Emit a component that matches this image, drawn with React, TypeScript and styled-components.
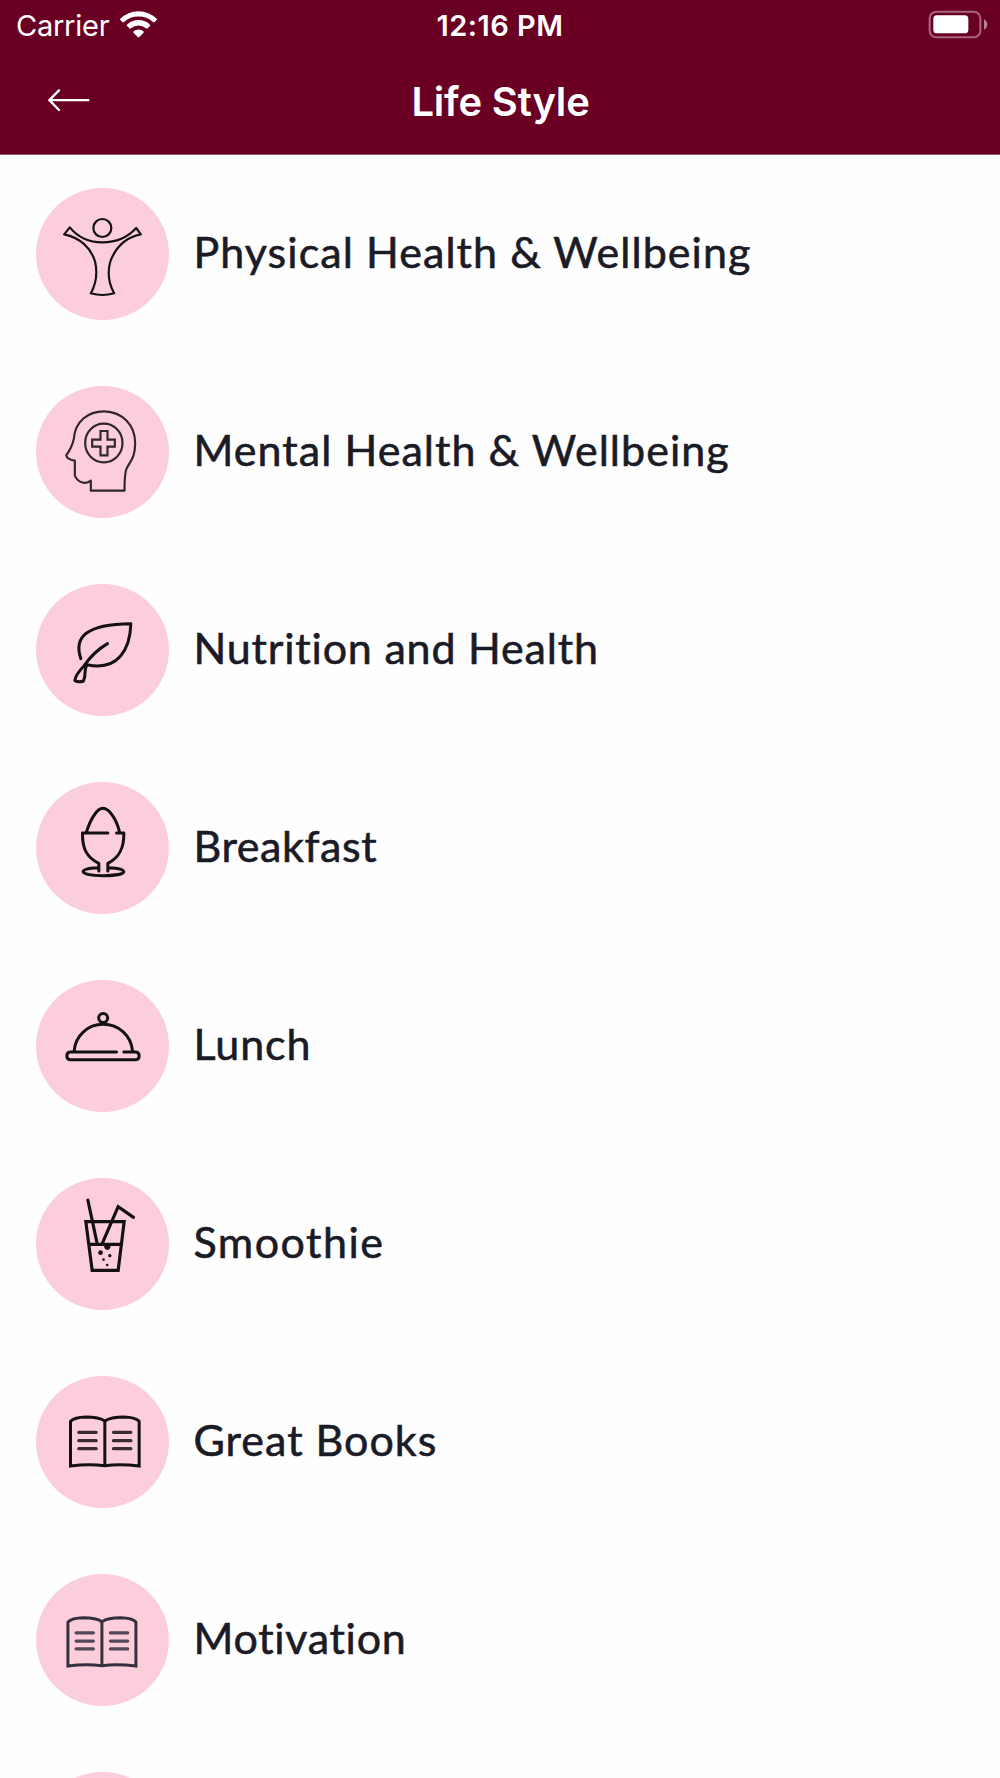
import React from 'react';
import styled, { createGlobalStyle } from 'styled-components';

const GlobalStyle = createGlobalStyle`
  * { box-sizing: border-box; }
  body { margin: 0; background: #fefefe; }
`;

const Screen = styled.main`
  display: flex;
  flex-direction: column;
  width: 1000px;
  height: 1778px;
  overflow: hidden;
  background: #fefefe;
`;

const Header = styled.header`
  flex: none;
  display: flex;
  flex-direction: column;
  height: 155px;
  background: #690024;
  border-bottom: 1px solid #96566e;
  color: #fff;
  font-family: Inter, 'Liberation Sans', sans-serif;
`;

const Bar = styled.div<{ $height: number; $top?: number; $left: number; $right: number }>`
  display: grid;
  grid-template-columns: 1fr auto 1fr;
  align-items: center;
  height: ${(p) => p.$height}px;
  padding: ${(p) => p.$top ?? 0}px ${(p) => p.$right}px 0 ${(p) => p.$left}px;
`;

const Network = styled.div`
  display: flex;
  align-items: center;
  gap: 11px;
`;

const Carrier = styled.span`
  padding-top: 3px;
  font-size: 29px;
  line-height: 36px;
  letter-spacing: -0.25px;
`;

const Clock = styled.time`
  padding: 3px 4px 0 0;
  font-size: 29px;
  line-height: 36px;
  font-weight: 600;
  letter-spacing: 0.5px;
`;

const Title = styled.h1`
  margin: 0;
  font-size: 40px;
  line-height: 48px;
  font-weight: 600;
  letter-spacing: -0.2px;
`;

const BackButton = styled.button`
  display: flex;
  justify-self: start;
  padding: 0 0 4px;
  border: 0;
  background: none;
  color: inherit;
`;

const Glyph = styled.svg`
  display: block;
  flex: none;
`;

const Battery = styled(Glyph)`
  justify-self: end;
`;

const List = styled.ul`
  flex: none;
  margin: 0;
  padding: 0;
  list-style: none;
`;

const Row = styled.li`
  display: flex;
  align-items: center;
  gap: 24.5px;
  height: 198px;
  padding-left: 36px;
`;

const Badge = styled.span`
  flex: none;
  width: 133px;
  height: 132px;
  border-radius: 50%;
  background: #fccedb;
`;

const Label = styled.span<{ $tracking: number }>`
  padding-bottom: 4px;
  color: #1a1b26;
  font-family: Lato, 'Open Sans', sans-serif;
  font-size: 43px;
  line-height: 56px;
  letter-spacing: ${(p) => p.$tracking}px;
  white-space: nowrap;
  -webkit-text-stroke: 0.6px #1a1b26;
`;

const Art = styled.svg<{ $ink: string; $weight: number }>`
  display: block;
  width: 133px;
  height: 132px;
  fill: none;
  stroke: ${(p) => p.$ink};
  stroke-width: ${(p) => p.$weight};
  stroke-linecap: round;
  stroke-linejoin: round;
`;

const Book = () => (
  <>
    <path strokeLinejoin="miter" d="M122 294V160Q134 148 168 147Q208 147 225 159Q243 147 282 147Q317 148 328 160V294Q270 287 225 293Q176 287 122 294ZM225 159V293" />
    <path strokeWidth="10" opacity="0.85" d="M147 193H199M147 218H199M147 242H199M251 193H303M251 218H303M251 242H303" />
  </>
);

type Entry = {
  label: string;
  tracking: number;
  ink?: string;
  weight?: number;
  art?: React.ReactNode;
};

const entries: Entry[] = [
  {
    label: 'Physical Health & Wellbeing',
    tracking: 1.06,
    weight: 6.5,
    art: (
      <>
        <circle cx="217.5" cy="144" r="27" />
        <path d="M120 142L103 163C151 173 184 204 196 246Q207 296 183 340Q218 350 253 340Q228 295 241 246C256 204 287 172 333 163L319 144C292 174 259 187 218 187C177 187 146 174 120 142Z" />
      </>
    ),
  },
  {
    label: 'Mental Health & Wellbeing',
    tracking: 1.05,
    ink: '#30262d',
    weight: 6.5,
    art: (
      <>
        <path d="M183 338V308C169 319 146 317 135 293V248Q112 245 109 232Q127 207 132 182C136 130 174 100 223 100C279 101 316 143 316 195C316 238 303 247 290 272Q284 286 284 338Z" />
        <ellipse cx="222" cy="195" rx="56" ry="58" />
        <path strokeLinejoin="miter" d="M212 159H233V185H255V206H233V232H212V206H187V185H212Z" />
      </>
    ),
  },
  {
    label: 'Nutrition and Health',
    tracking: 0.8,
    weight: 9,
    art: (
      <path d="M153 248C131 184 168 144 303 143C301 219 265 286 172 266M233 203C204 220 180 244 163 269Q136 297 135 314Q147 320 161 315Q166 302 166 285Q168 270 172 266" />
    ),
  },
  {
    label: 'Breakfast',
    tracking: 0.6,
    weight: 9,
    art: (
      <path d="M170 174C182 133 203 103 219 103C238 103 260 136 269 174M234 177H158C157 224 171 251 207 268V291M260 177H282C283 224 268 251 234 268V291M203 281C173 282 160 288 160 293C161 301 190 305 220 305C253 305 281 300 282 293C281 287 265 282 238 281" />
    ),
  },
  {
    label: 'Lunch',
    tracking: 0.9,
    weight: 9,
    art: (
      <>
        <circle cx="220" cy="138" r="13.5" />
        <path d="M133 237C136 192 173 157 220 157C267 157 304 191 308 237M260 240H121Q111 241 111 252Q111 262 121 263H318Q328 262 328 252Q328 241 318 240H282" />
      </>
    ),
  },
  {
    label: 'Smoothie',
    tracking: 1.5,
    weight: 9.5,
    art: (
      <>
        <path strokeLinejoin="miter" d="M168 155H283L265 301H187ZM178 223H275M174 90L202 221M217 221L265 110L311 142" />
        <g fill="#141114" stroke="none">
          <path d="M223 222H242V231Q240 240 232 240Q224 239 223 231Z" />
          <circle cx="212" cy="248" r="7" />
          <circle cx="240" cy="257" r="5" />
          <circle cx="221" cy="269" r="4" />
          <circle cx="232" cy="285" r="4" />
        </g>
      </>
    ),
  },
  { label: 'Great Books', tracking: 1, weight: 9, art: <Book /> },
  {
    label: 'Motivation',
    tracking: 0.7,
    ink: '#34303f',
    weight: 9,
    art: (
      <g transform="translate(-6.5 11) scale(0.99 0.983)">
        <Book />
      </g>
    ),
  },
  { label: '', tracking: 0 },
];

export default function App() {
  return (
    <>
      <GlobalStyle />
      <Screen>
        <Header>
          <Bar $height={48} $left={16} $right={12}>
            <Network>
              <Carrier>Carrier</Carrier>
              <Glyph width="37" height="28" viewBox="360 29 111 84" fill="#fff">
                <path d="M361 55A78 78 0 0 1 470 55Q472 57 470 59L464 65Q462 67 459 65A66 66 0 0 0 372 65Q369 67 367 65L361 59Q359 57 361 55Z" />
                <path d="M381 73A50 50 0 0 1 450 73Q452 75 450 77L443 84Q441 86 438 84A35 35 0 0 0 393 84Q390 86 388 84L381 77Q379 75 381 73Z" />
                <path d="M401 93A22 22 0 0 1 430 93Q433 95 430 98L418 110Q415.500 112.500 413 110L401 98Q398 95 401 93Z" />
              </Glyph>
            </Network>
            <Clock>12:16 PM</Clock>
            <Battery width="60" height="29" viewBox="203 29 180 87">
              <rect x="208" y="34" width="152" height="77" rx="20" fill="none" stroke="#a9667c" strokeWidth="6" />
              <rect x="219" y="45" width="105" height="54" rx="11" fill="#fff" />
              <path d="M371 57Q381 62 381 72.500Q381 83 371 88Z" fill="#b4809a" />
            </Battery>
          </Bar>
          <Bar $height={106} $top={2} $left={47} $right={46}>
            <BackButton aria-label="Back">
              <Glyph width="44" height="26" viewBox="141 261 132 78" fill="none" stroke="#fff" strokeWidth="7" strokeLinecap="round" strokeLinejoin="round">
                <path d="M265 300.500H148M177 271L148 300.500L177 330" />
              </Glyph>
            </BackButton>
            <Title>Life Style</Title>
          </Bar>
        </Header>
        <List>
          {entries.map((entry) => (
            <Row key={entry.label}>
              <Badge>
                {entry.art && (
                  <Art viewBox="18.500 24 399 396" $ink={entry.ink ?? '#141114'} $weight={entry.weight ?? 8}>
                    {entry.art}
                  </Art>
                )}
              </Badge>
              <Label $tracking={entry.tracking}>{entry.label}</Label>
            </Row>
          ))}
        </List>
      </Screen>
    </>
  );
}
